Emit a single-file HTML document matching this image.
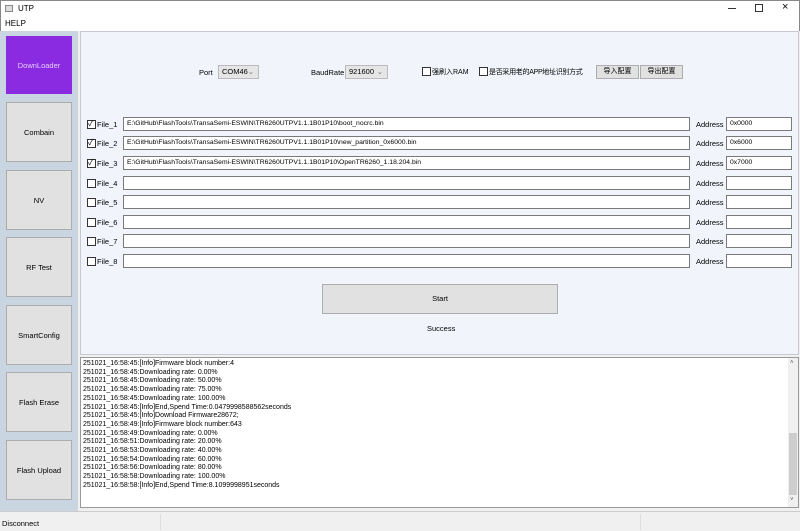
<!DOCTYPE html><html><head><style>
*{box-sizing:border-box;margin:0;padding:0}
body{width:800px;height:531px;background:#f0f0f0;font-family:"Liberation Sans","Noto Sans CJK SC",sans-serif;font-size:7.5px;color:#000;position:relative;overflow:hidden}
.a{position:absolute;white-space:nowrap}
.btn{position:absolute;left:6px;width:66px;height:60px;background:#e1e1e1;border:1px solid #adadad;display:flex;align-items:center;justify-content:center;font-size:7.5px}
.cb{position:absolute;width:9px;height:9px;border:1px solid #333;background:#fff}
.ck{position:absolute;font-size:8px;line-height:9px}
.tb{position:absolute;height:14px;background:#fff;border:1px solid #7a7a7a;font-size:6.8px;line-height:12px;padding-left:3px;white-space:nowrap;overflow:hidden}
.log div{line-height:8.7px;font-size:7px}
.cmb{position:absolute;height:14px;background:#e5e5e5;border:1px solid #bbb;padding:0 3px;line-height:12px}
.cmb i{position:absolute;right:4px;top:0;font-style:normal;color:#777}
</style></head><body>
<div class="a" style="left:0;top:0;width:800px;height:31px;background:#fff;border:1px solid #888;border-bottom:none"></div>
<div class="a" style="left:5px;top:5px;width:8px;height:7px;border:1px solid #888;background:#ddd"></div>
<div class="a" style="left:18px;top:4px;font-size:8px">UTP</div>
<div class="a" style="left:5px;top:19px;font-size:8px">HELP</div>
<div class="a" style="left:728px;top:8px;width:8px;height:1px;background:#333"></div>
<div class="a" style="left:755px;top:4px;width:8px;height:8px;border:1px solid #333"></div>
<div class="a" style="left:782px;top:1px;font-size:11px">×</div>
<div class="a" style="left:0;top:31px;width:78px;height:480px;background:#c9d6e2"></div>
<div class="btn" style="top:36px;background:#8a2be2;border-color:#8a2be2;color:#e6d0ff;height:58px">DownLoader</div>
<div class="btn" style="top:102px">Combain</div>
<div class="btn" style="top:170px">NV</div>
<div class="btn" style="top:237px">RF Test</div>
<div class="btn" style="top:305px">SmartConfig</div>
<div class="btn" style="top:372px">Flash Erase</div>
<div class="btn" style="top:440px">Flash Upload</div>
<div class="a" style="left:80px;top:31px;width:719px;height:324px;background:#f1f5fb;border:1px solid #c8c8d0"></div>
<div class="a" style="left:199px;top:68px">Port</div>
<div class="cmb" style="left:218px;top:65px;width:41px">COM46<i>⌄</i></div>
<div class="a" style="left:311px;top:68px">BaudRate</div>
<div class="cmb" style="left:345px;top:65px;width:43px">921600<i>⌄</i></div>
<div class="cb" style="left:422px;top:67px"></div><div class="a" style="left:432px;top:67px;font-size:7px">强刷入RAM</div>
<div class="cb" style="left:479px;top:67px"></div><div class="a" style="left:489px;top:67px;font-size:7px;letter-spacing:-0.3px">是否采用老的APP地址识别方式</div>
<div class="a" style="left:596px;top:65px;width:43px;height:14px;background:#e1e1e1;border:1px solid #adadad;text-align:center;line-height:12px;font-size:7px">导入配置</div>
<div class="a" style="left:640px;top:65px;width:43px;height:14px;background:#e1e1e1;border:1px solid #adadad;text-align:center;line-height:12px;font-size:7px">导出配置</div>

<div class="cb" style="left:87px;top:120px"></div><div class="ck" style="left:88px;top:119px">✓</div><div class="a" style="left:97px;top:120px">File_1</div>
<div class="tb" style="left:123px;top:117px;width:567px">E:\GitHub\FlashTools\TransaSemi-ESWIN\TR6260UTPV1.1.1B01P10\boot_nocrc.bin</div>
<div class="a" style="left:696px;top:120px">Address</div><div class="tb" style="left:726px;top:117px;width:66px">0x0000</div>

<div class="cb" style="left:87px;top:139px"></div><div class="ck" style="left:88px;top:138px">✓</div><div class="a" style="left:97px;top:139px">File_2</div>
<div class="tb" style="left:123px;top:136px;width:567px">E:\GitHub\FlashTools\TransaSemi-ESWIN\TR6260UTPV1.1.1B01P10\new_partition_0x6000.bin</div>
<div class="a" style="left:696px;top:139px">Address</div><div class="tb" style="left:726px;top:136px;width:66px">0x6000</div>

<div class="cb" style="left:87px;top:159px"></div><div class="ck" style="left:88px;top:158px">✓</div><div class="a" style="left:97px;top:159px">File_3</div>
<div class="tb" style="left:123px;top:156px;width:567px">E:\GitHub\FlashTools\TransaSemi-ESWIN\TR6260UTPV1.1.1B01P10\OpenTR6260_1.18.204.bin</div>
<div class="a" style="left:696px;top:159px">Address</div><div class="tb" style="left:726px;top:156px;width:66px">0x7000</div>

<div class="cb" style="left:87px;top:179px"></div><div class="a" style="left:97px;top:179px">File_4</div><div class="tb" style="left:123px;top:176px;width:567px"></div><div class="a" style="left:696px;top:179px">Address</div><div class="tb" style="left:726px;top:176px;width:66px"></div>
<div class="cb" style="left:87px;top:198px"></div><div class="a" style="left:97px;top:198px">File_5</div><div class="tb" style="left:123px;top:195px;width:567px"></div><div class="a" style="left:696px;top:198px">Address</div><div class="tb" style="left:726px;top:195px;width:66px"></div>
<div class="cb" style="left:87px;top:218px"></div><div class="a" style="left:97px;top:218px">File_6</div><div class="tb" style="left:123px;top:215px;width:567px"></div><div class="a" style="left:696px;top:218px">Address</div><div class="tb" style="left:726px;top:215px;width:66px"></div>
<div class="cb" style="left:87px;top:237px"></div><div class="a" style="left:97px;top:237px">File_7</div><div class="tb" style="left:123px;top:234px;width:567px"></div><div class="a" style="left:696px;top:237px">Address</div><div class="tb" style="left:726px;top:234px;width:66px"></div>
<div class="cb" style="left:87px;top:257px"></div><div class="a" style="left:97px;top:257px">File_8</div><div class="tb" style="left:123px;top:254px;width:567px"></div><div class="a" style="left:696px;top:257px">Address</div><div class="tb" style="left:726px;top:254px;width:66px"></div>

<div class="a" style="left:322px;top:284px;width:236px;height:30px;background:#e1e1e1;border:1px solid #adadad;text-align:center;line-height:28px">Start</div>
<div class="a" style="left:427px;top:324px">Success</div>

<div class="a log" style="left:80px;top:357px;width:719px;height:151px;background:#fff;border:1px solid #999;padding:2px 0 0 2px">
<div>251021_16:58:45:[Info]Firmware block number:4</div>
<div>251021_16:58:45:Downloading rate: 0.00%</div>
<div>251021_16:58:45:Downloading rate: 50.00%</div>
<div>251021_16:58:45:Downloading rate: 75.00%</div>
<div>251021_16:58:45:Downloading rate: 100.00%</div>
<div>251021_16:58:45:[Info]End,Spend Time:0.0479998588562seconds</div>
<div>251021_16:58:45:[Info]Download Firmware28672;</div>
<div>251021_16:58:49:[Info]Firmware block number:643</div>
<div>251021_16:58:49:Downloading rate: 0.00%</div>
<div>251021_16:58:51:Downloading rate: 20.00%</div>
<div>251021_16:58:53:Downloading rate: 40.00%</div>
<div>251021_16:58:54:Downloading rate: 60.00%</div>
<div>251021_16:58:56:Downloading rate: 80.00%</div>
<div>251021_16:58:58:Downloading rate: 100.00%</div>
<div>251021_16:58:58:[Info]End,Spend Time:8.1099998951seconds</div>
</div>
<div class="a" style="left:788px;top:358px;width:10px;height:149px;background:#f0f0f0"></div>
<div class="a" style="left:789px;top:433px;width:8px;height:62px;background:#cdcdcd"></div>
<div class="a" style="left:790px;top:360px;font-size:6px;color:#555">˄</div>
<div class="a" style="left:790px;top:497px;font-size:6px;color:#555">˅</div>
<div class="a" style="left:0;top:511px;width:800px;height:20px;background:#f0f0f0;border-top:1px solid #ccc"></div>
<div class="a" style="left:2px;top:519px">Disconnect</div>
<div class="a" style="left:160px;top:514px;width:1px;height:16px;background:#ddd"></div>
<div class="a" style="left:640px;top:514px;width:1px;height:16px;background:#ddd"></div>
</body></html>
